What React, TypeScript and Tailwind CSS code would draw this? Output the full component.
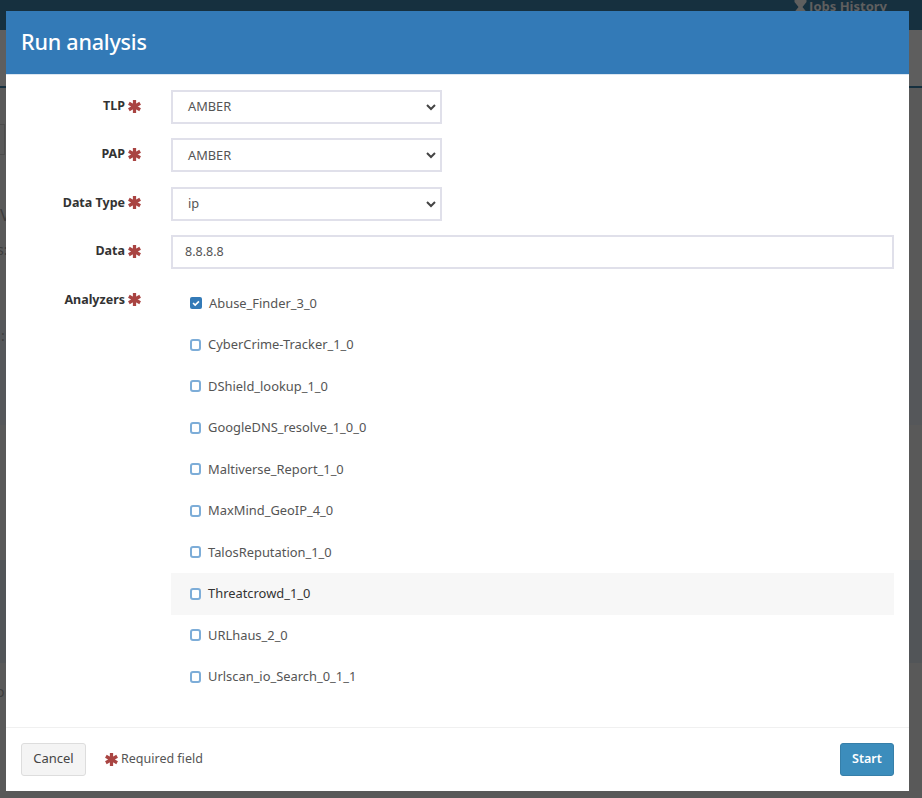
const analyzers = [
  "Abuse_Finder_3_0",
  "CyberCrime-Tracker_1_0",
  "DShield_lookup_1_0",
  "GoogleDNS_resolve_1_0_0",
  "Maltiverse_Report_1_0",
  "MaxMind_GeoIP_4_0",
  "TalosReputation_1_0",
  "Threatcrowd_1_0",
  "URLhaus_2_0",
  "Urlscan_io_Search_0_1_1",
];

function Asterisk({ className }: { className?: string }) {
  return (
    <svg viewBox="0 0 24 24" className={className} fill="none" stroke="#a94442" strokeWidth="6">
      <path d="M12 0v24M1.600 6l20.800 12M22.400 6L1.600 18" />
    </svg>
  );
}

function Label({ text }: { text: string }) {
  return (
    <div className="flex h-[32px] w-[135px] shrink-0 items-center justify-end gap-[3px] text-[12.5px] font-bold leading-[18px] text-[#333333]">
      <span>{text}</span>
      <Asterisk className="h-[13px] w-[13px]" />
    </div>
  );
}

function SelectField({ value }: { value: string }) {
  return (
    <div className="flex h-[34px] w-[271px] items-center justify-between border-2 border-[#e0e0ea] bg-white pl-[15px] pr-[3px] text-[12.800px] text-[#555555]">
      <span>{value}</span>
      <svg viewBox="0 0 12 12" className="h-[12px] w-[12px]" fill="none" stroke="#444444" strokeWidth="2">
        <path d="M2 4l4 4 4-4" />
      </svg>
    </div>
  );
}

function CheckBox({ checked }: { checked: boolean }) {
  return checked ? (
    <span className="flex h-[12px] w-[12px] items-center justify-center rounded-[2px] bg-[#337ab7]">
      <svg viewBox="0 0 12 12" className="h-[10px] w-[10px]" fill="none" stroke="white" strokeWidth="2">
        <path d="M2.500 6l2.500 2.500 4.500-4.500" />
      </svg>
    </span>
  ) : (
    <span className="h-[12px] w-[11px] rounded-[3px] border-2 border-[#7dadd8] bg-white" />
  );
}

export default function App() {
  return (
    <div className="relative h-[798px] w-[922px] overflow-hidden bg-[#595959] font-['Noto_Sans',sans-serif]">
      {/* page behind the backdrop */}
      <div className="flex h-[30px] justify-end gap-[2px] bg-[#16303f] pr-[35px] text-[13px] font-bold leading-[13px] text-[#5f5f5f]">
        <svg viewBox="0 0 12 14" className="h-[14px] w-[13px]" fill="#5f5f5f">
          <path d="M0 0h12v2l-4 5 4 5v2H0v-2l4-5-4-5z" />
        </svg>
        <span>Jobs History</span>
      </div>
      <div className="h-[56px] bg-[#5e5e5e]" />
      <div className="h-[2px] bg-[#16303f]" />
      <div className="h-[232px] bg-[#595959]">
        <div className="h-[36px]" />
        <div className="h-[31px] w-[5px] border-y border-r border-[#4c4c4c]" />
        <div className="mt-[50px] text-[17px] leading-[20px] text-[#3d3d3d]">V</div>
        <div className="mt-[15px] -ml-[3px] text-[14px] leading-[20px] text-[#3d3d3d]">s:</div>
      </div>
      <div className="h-[105px] bg-[#55575a]">
        <div className="pl-[1px] text-[14px] leading-[32px] text-[#3d3d3d]">:</div>
      </div>
      <div className="h-[135px] bg-[#595959]" />
      <div className="h-[103px] bg-[#525558]" />
      <div className="h-[135px] bg-[#595959]">
        <div className="mt-[19px] -ml-[4px] text-[14px] leading-[20px] text-[#3d3d3d]">o</div>
      </div>

      {/* modal */}
      <div className="absolute left-[6px] top-[11px] flex h-[780px] w-[903px] flex-col bg-white">
        <div className="flex h-[64px] items-center border-b border-[#dbe6f1] bg-[#337ab7] pl-[15px] text-[21.500px] font-medium tracking-[-0.2px] text-white">
          Run analysis
        </div>

        <div className="flex flex-1 flex-col gap-[14.400px] pr-[15px] pt-[15px]">
          <div className="flex gap-[30px]">
            <Label text="TLP" />
            <SelectField value="AMBER" />
          </div>
          <div className="flex gap-[30px]">
            <Label text="PAP" />
            <SelectField value="AMBER" />
          </div>
          <div className="flex gap-[30px]">
            <Label text="Data Type" />
            <SelectField value="ip" />
          </div>
          <div className="flex gap-[30px]">
            <Label text="Data" />
            <div className="flex h-[34px] flex-1 items-center border-2 border-[#e0e0ea] pl-[12px] text-[12.500px] text-[#555555]">
              8.8.8.8
            </div>
          </div>
          <div className="flex gap-[30px]">
            <Label text="Analyzers" />
            <div className="-mt-[1px] flex flex-1 flex-col">
              {analyzers.map((name, i) => (
                <div
                  key={name}
                  className={
                    i === 7
                      ? "flex h-[41.500px] items-center gap-[7px] bg-[#f7f7f7] pl-[19px] text-[12.900px] text-[#333333]"
                      : "flex h-[41.500px] items-center gap-[7px] pl-[19px] text-[12.900px] text-[#555555]"
                  }
                >
                  <CheckBox checked={i === 0} />
                  <span>{name}</span>
                </div>
              ))}
            </div>
          </div>
        </div>

        <div className="flex h-[64px] items-center justify-between border-t border-[#f0f0f0] px-[15px]">
          <div className="flex items-center gap-[19px]">
            <div className="flex h-[33px] w-[65px] items-center justify-center rounded-[3px] border border-[#dddddd] bg-[#f4f4f4] pb-[1px] text-[13px] text-[#444444]">
              Cancel
            </div>
            <div className="flex items-center gap-[3px] text-[12.500px] text-[#555555]">
              <Asterisk className="h-[13px] w-[13px]" />
              <span>Required field</span>
            </div>
          </div>
          <div className="flex h-[33px] w-[54px] items-center justify-center rounded-[3px] border border-[#367fa9] bg-[#3c8dbc] text-[12.500px] font-semibold text-white">
            Start
          </div>
        </div>
      </div>
    </div>
  );
}
